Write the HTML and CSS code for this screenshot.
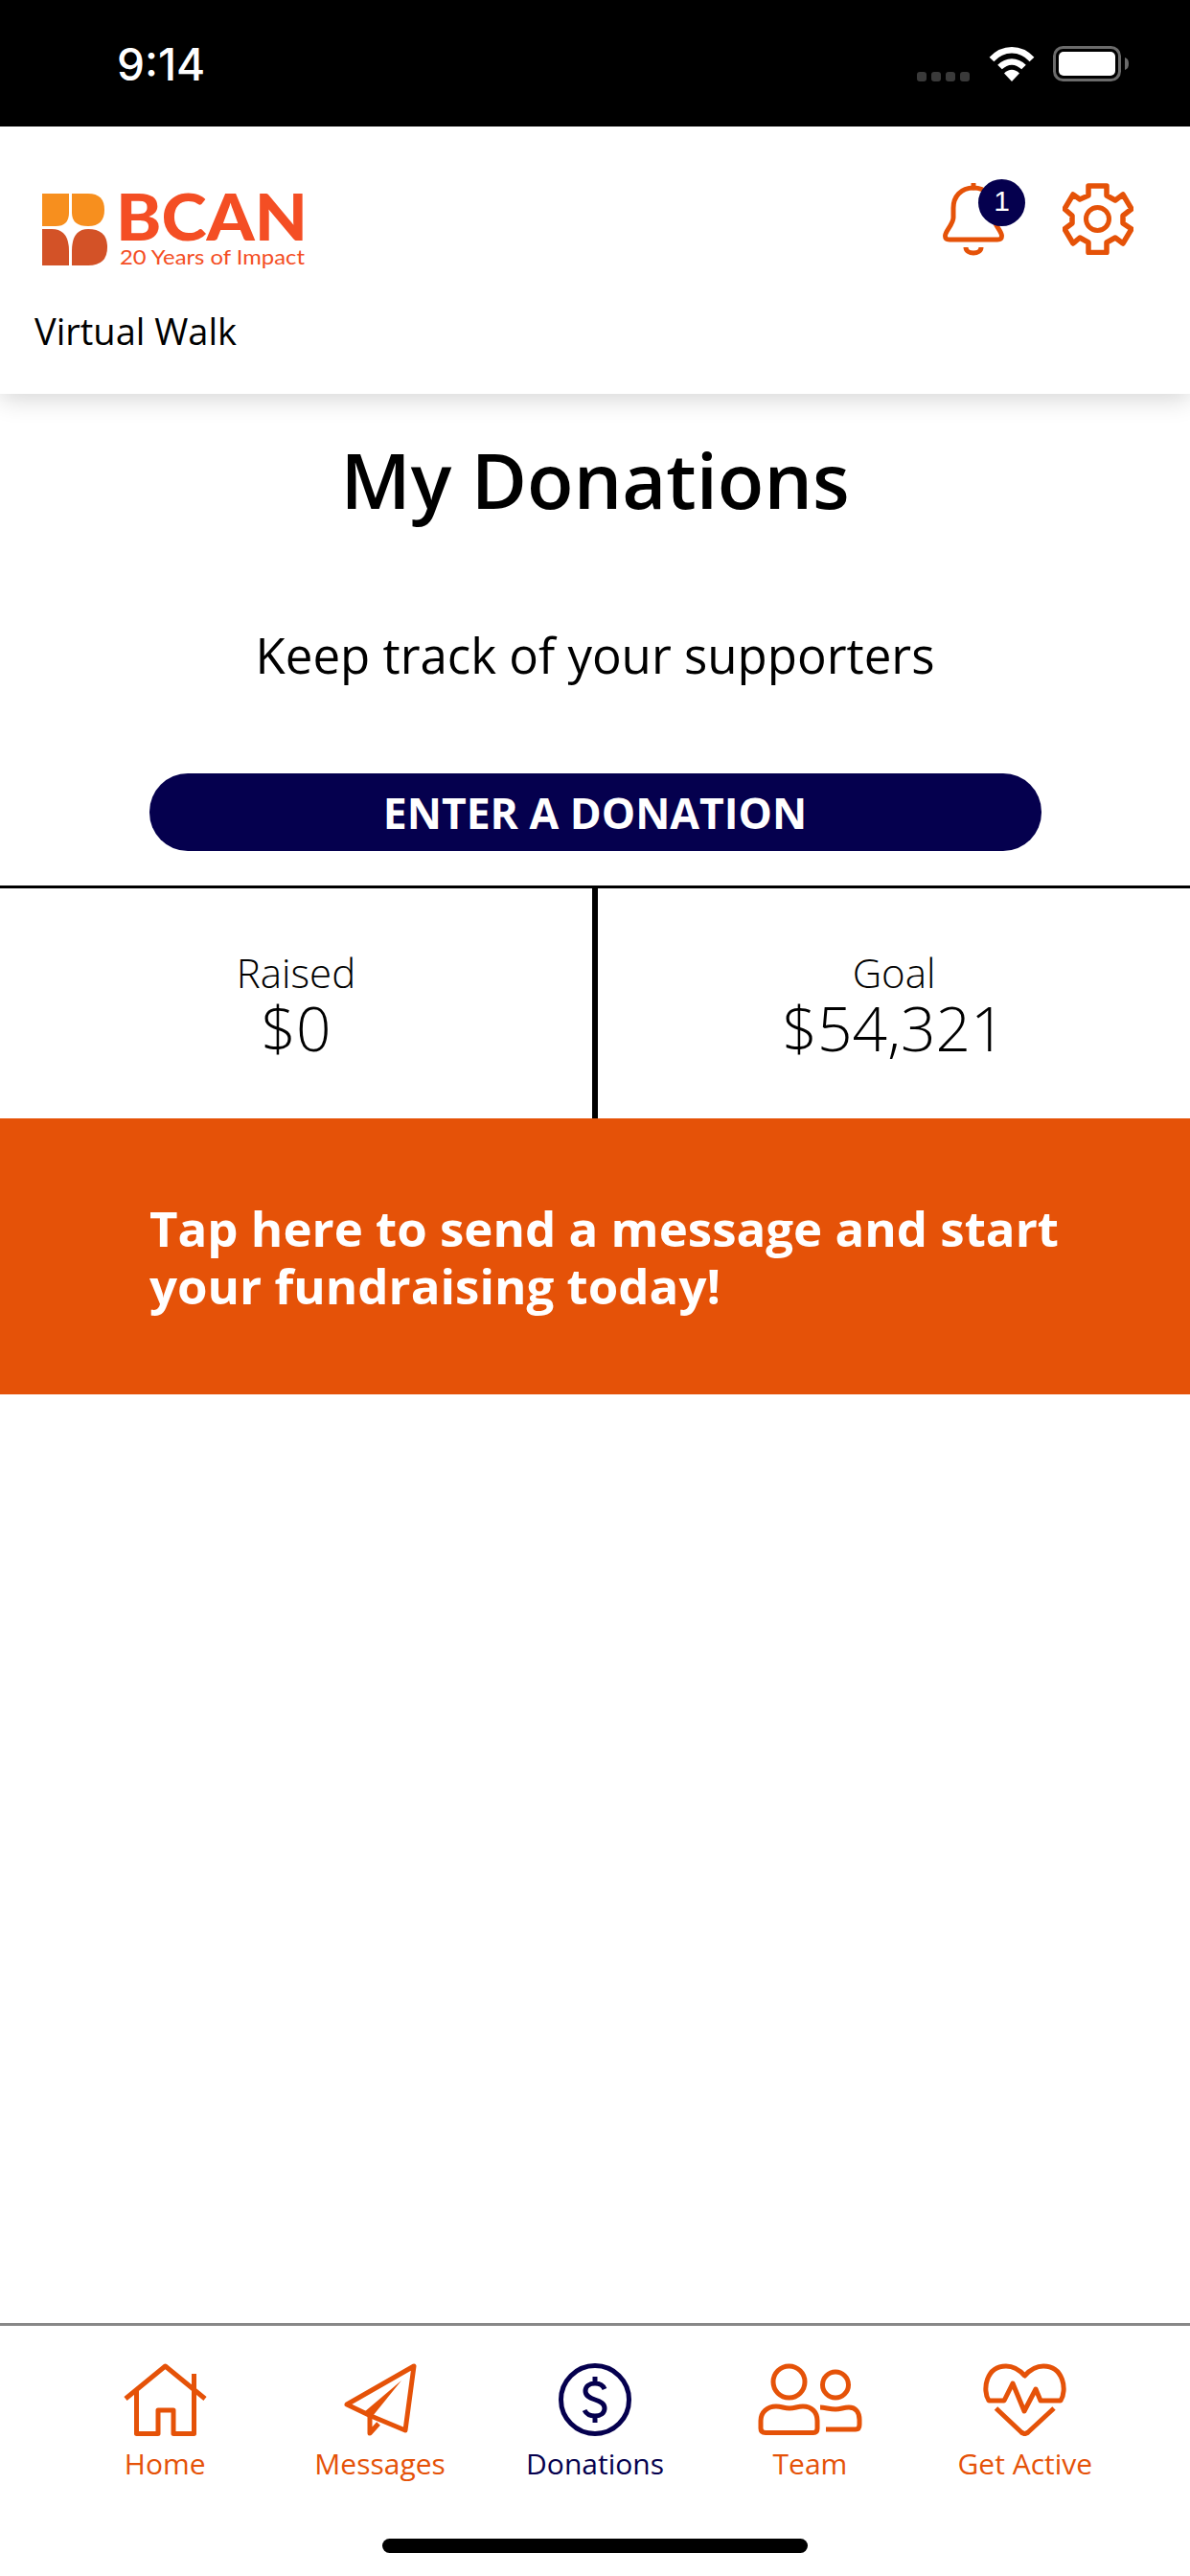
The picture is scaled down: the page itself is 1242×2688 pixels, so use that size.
FILE: index.html
```html
<!DOCTYPE html>
<html lang="en">
<head>
  <title>My Donations</title>
  <link rel="stylesheet" href="styles.css">
</head>
<body>
  <div class="phone">
    <div class="status-bar">
      <span class="time">9:14</span>
      <div class="status-icons">
        <div class="signal"><i></i><i></i><i></i><i></i></div>
        <svg class="wifi" viewBox="0 0 48 37">
          <path d="M3 14C15 1 33 1 45 14" fill="none" stroke="#fff" stroke-width="6.5"/>
          <path d="M11.500 22C19 14.500 29 14.500 36.500 22" fill="none" stroke="#fff" stroke-width="6.500"/>
          <path d="M16 28.500C21 23.500 27 23.500 32 28.500L24 37Z" fill="#fff"/>
        </svg>
        <svg class="battery" viewBox="0 0 79 37">
          <rect x="1.500" y="1.500" width="68" height="34" rx="9" fill="none" stroke="#6b6b6b" stroke-width="3"/>
          <rect x="6" y="6" width="59" height="25" rx="5" fill="#fff"/>
          <path d="M75 12C78 13 79 15 79 18.500C79 22 78 24 75 25Z" fill="#6b6b6b"/>
        </svg>
      </div>
    </div>

    <header class="app-header">
      <div class="brand">
        <svg class="logo" viewBox="0 -20 280 110">
          <path d="M0 0H28V20Q28 34 14 34H0Z" fill="#f78f1e"/>
          <path d="M31 0H48Q65 0 65 17Q65 34 48 34Q31 34 31 20Z" fill="#f78f1e"/>
          <path d="M0 37H10Q28 37 28 60V75H0Z" fill="#d35227"/>
          <path d="M31 60Q31 37 48 37Q68 37 68 56Q68 75 48 75H31Z" fill="#d35227"/>
          <text class="logo-name" x="77" y="49" textLength="200" lengthAdjust="spacingAndGlyphs">BCAN</text>
          <text class="logo-tag" x="81" y="74" textLength="193" lengthAdjust="spacingAndGlyphs">20 Years of Impact</text>
        </svg>
        <div class="brand-sub">Virtual Walk</div>
      </div>
      <div class="header-icons">
        <div class="bell-wrap">
          <svg class="bell" viewBox="0 0 64 76">
            <path d="M32 5C19 5 11 14 11 26V36C11 43 2.500 50 2.500 55C2.500 58 4 59 7 59H57C60 59 61.500 58 61.500 55C61.500 50 53 43 53 36V26C53 14 45 5 32 5Z" fill="none" stroke="#e55208" stroke-width="5"/>
            <path d="M32 1V5" stroke="#e55208" stroke-width="5" stroke-linecap="round"/>
            <path d="M24 67C24 75 40 75 40 67" fill="none" stroke="#e55208" stroke-width="5"/>
          </svg>
          <span class="badge">1</span>
        </div>
        <svg class="gear" viewBox="0 0 74 75">
          <path d="M27 3H46V13L55 18L63 12L72 27L63 34V42L72 48L63 63L55 57L46 62V72.500H27V62L18 57L11 63L2 48L10 42V34L2 27L11 12L18 17L27 13Z" fill="none" stroke="#e55208" stroke-width="5.500" stroke-linejoin="round"/>
          <circle cx="36.500" cy="37.500" r="12" fill="none" stroke="#e55208" stroke-width="5"/>
        </svg>
      </div>
    </header>

    <main class="content">
      <h1 class="page-title">My Donations</h1>
      <p class="page-sub">Keep track of your supporters</p>
      <button class="donate-btn">ENTER A DONATION</button>

      <div class="totals">
        <div class="total-cell">
          <div class="total-label">Raised</div>
          <div class="total-value">$0</div>
        </div>
        <div class="total-cell">
          <div class="total-label">Goal</div>
          <div class="total-value">$54,321</div>
        </div>
      </div>

      <div class="banner">Tap here to send a message and start your fundraising today!</div>
    </main>

    <nav class="tab-bar">
      <div class="tab">
        <svg class="tab-icon" viewBox="0 0 87 76">
          <path d="M2 37L43.500 3L85 37M13.500 27V73.500H36V49H52V73.500H73.500V11" fill="none" stroke="#e55208" stroke-width="5" stroke-linejoin="round"/>
        </svg>
        <span>Home</span>
      </div>
      <div class="tab">
        <svg class="tab-icon" viewBox="0 0 76 76">
          <path d="M3 43L73 3L64 70L27 54.500Z" fill="none" stroke="#e55208" stroke-width="5" stroke-linejoin="round"/>
          <path d="M27 55V73L36 63" fill="none" stroke="#e55208" stroke-width="5" stroke-linejoin="round"/>
          <path d="M60 18L21 51L30 55Z" fill="#e55208"/>
        </svg>
        <span>Messages</span>
      </div>
      <div class="tab active">
        <svg class="tab-icon" viewBox="0 0 76 76">
          <circle cx="38" cy="38" r="35.500" fill="none" stroke="#05004e" stroke-width="5"/>
          <path d="M48 27C46 22 42 21 38 21C32 21 28 24 28 29C28 34 32 36 38 38C44 40 48 42 48 47C48 52 44 55 38 55C33 55 29 53 27 49M38 14V21M38 55V62" fill="none" stroke="#05004e" stroke-width="5"/>
        </svg>
        <span>Donations</span>
      </div>
      <div class="tab">
        <svg class="tab-icon" viewBox="0 0 109 76">
          <circle cx="32.500" cy="19.500" r="16.500" fill="none" stroke="#e55208" stroke-width="5"/>
          <circle cx="81" cy="22.500" r="13.500" fill="none" stroke="#e55208" stroke-width="5"/>
          <path d="M8 72.500H58Q62 72.500 62 68V60C62 51 56 45 47 45C41 45 39 47 33 47S25 45 19 45C10 45 3 51 3 60V68Q3 72.500 8 72.500Z" fill="none" stroke="#e55208" stroke-width="5"/>
          <path d="M65 46C70 46 75 48 81 48S89 46 95 46C102 46 106 51 106 59V64Q106 69 102 69H71" fill="none" stroke="#e55208" stroke-width="5"/>
        </svg>
        <span>Team</span>
      </div>
      <div class="tab">
        <svg class="tab-icon" viewBox="0 0 87 76">
          <path d="M81 39C88 28 84 3 63 3C54 3 48 8 43.500 13C39 8 33 3 24 3C3 3 -1 28 6 39H22L31 21L43 50L55 27L60 39Z" fill="none" stroke="#e55208" stroke-width="5" stroke-linejoin="round"/>
          <path d="M13.500 47L40 72Q43.500 75 47 72L74 47" fill="none" stroke="#e55208" stroke-width="5"/>
        </svg>
        <span>Get Active</span>
      </div>
    </nav>

    <div class="home-bar"><div class="home-pill"></div></div>
  </div>
</body>
</html>
```

FILE: styles.css
```css
* {
  box-sizing: border-box;
}

body {
  margin: 0;
  padding: 0;
  background-color: #fff;
  font-family: "Open Sans", Arial, sans-serif;
  color: #000;
}

.phone {
  width: 1242px;
  height: 2688px;
  display: flex;
  flex-direction: column;
  overflow: hidden;
}

/* status bar */
.status-bar {
  height: 132px;
  background-color: #000;
  display: flex;
  justify-content: space-between;
  padding: 48px 64px 0 122px;
}

.time {
  font-family: Inter, sans-serif;
  font-size: 46px;
  font-weight: 500;
  line-height: 38px;
  color: #fff;
}

.status-icons {
  display: flex;
  align-items: flex-start;
}

.signal {
  display: flex;
  gap: 5px;
  margin-top: 27px;
  margin-right: 20px;
}

.signal i {
  width: 10px;
  height: 10px;
  border-radius: 3px;
  background-color: #3a3a3a;
}

.wifi {
  width: 48px;
  height: 37px;
  margin-right: 19px;
}

.battery {
  width: 79px;
  height: 37px;
}

/* header */
.app-header {
  height: 279px;
  background-color: #fff;
  display: flex;
  justify-content: space-between;
  padding: 50px 59px 0 36px;
  box-shadow: 0 6px 24px rgba(0, 0, 0, 0.16);
  position: relative;
}

.logo {
  display: block;
  width: 280px;
  height: 110px;
  margin-left: 8px;
}

.logo-name {
  font-family: Lato, sans-serif;
  font-size: 66px;
  font-weight: 900;
  fill: #f44e24;
}

.logo-tag {
  font-family: Lato, sans-serif;
  font-size: 22px;
  fill: #f44e24;
}

.brand-sub {
  font-size: 38px;
  line-height: 50px;
  margin-top: 28px;
}

.header-icons {
  display: flex;
  align-items: flex-start;
  gap: 61px;
  margin-top: 9px;
}

.bell-wrap {
  position: relative;
  width: 64px;
  height: 76px;
}

.bell {
  display: block;
  width: 64px;
  height: 76px;
}

.badge {
  position: absolute;
  top: -4px;
  left: 37px;
  width: 49px;
  height: 49px;
  border-radius: 50%;
  background-color: #05004e;
  color: #fff;
  font-family: "Liberation Sans", Arial, sans-serif;
  font-size: 30px;
  line-height: 46px;
  text-align: center;
}

.gear {
  display: block;
  width: 74px;
  height: 75px;
}

/* main */
.content {
  flex: 1;
  display: flex;
  flex-direction: column;
  align-items: center;
}

.page-title {
  font-size: 79.500px;
  font-weight: 600;
  line-height: 108px;
  margin: 35px 0 0;
}

.page-sub {
  font-size: 51px;
  line-height: 68px;
  margin: 95px 0 0;
}

.donate-btn {
  width: 931px;
  height: 81px;
  margin-top: 90px;
  border: none;
  border-radius: 40px;
  background-color: #05004e;
  color: #fff;
  font-family: "Open Sans", Arial, sans-serif;
  font-size: 44.500px;
  font-weight: 700;
  padding: 0;
}

.totals {
  width: 100%;
  height: 243px;
  margin-top: 36px;
  border-top: 3px solid #000;
  display: flex;
}

.total-cell {
  flex: 1;
  text-align: center;
  padding-top: 64px;
  font-weight: 300;
}

.total-cell + .total-cell {
  border-left: 6px solid #000;
}

.total-label {
  font-size: 42px;
  line-height: 48px;
}

.total-value {
  font-size: 64px;
  line-height: 68px;
}

.banner {
  width: 100%;
  height: 288px;
  background-color: #e55208;
  color: #fff;
  font-size: 51px;
  font-weight: 700;
  line-height: 60px;
  padding: 84px 100px 0 156px;
}

/* bottom tabs */
.tab-bar {
  height: 171px;
  border-top: 3px solid #888;
  display: flex;
  padding: 39px 60px 0;
}

.tab {
  flex: 1;
  display: flex;
  flex-direction: column;
  align-items: center;
  color: #e55208;
  font-size: 30px;
  line-height: 42px;
}

.tab.active {
  color: #05004e;
}

.tab-icon {
  display: block;
  height: 76px;
  margin-bottom: 8px;
}

.home-bar {
  height: 93px;
  padding-top: 54px;
}

.home-pill {
  width: 444px;
  height: 15px;
  margin: 0 auto;
  border-radius: 8px;
  background-color: #000;
}
```
